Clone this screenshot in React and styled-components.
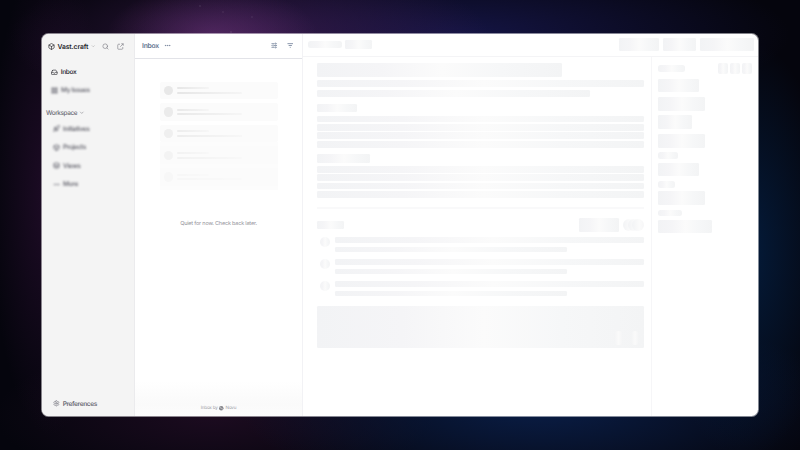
import React from 'react';
import styled, { createGlobalStyle } from 'styled-components';
import { Box, Search, ChevronDown, Inbox as InboxIcon, Rocket, Layers, Ellipsis, Settings } from 'lucide-react';

const GlobalStyle = createGlobalStyle`
  * { box-sizing: border-box; }
  body {
    margin: 0;
    font-family: Inter, "Liberation Sans", sans-serif;
    text-rendering: geometricPrecision;
  }
`;

const Backdrop = styled.div`
  width: 800px;
  height: 450px;
  overflow: hidden;
  padding: 34px 42px;
  background:
    radial-gradient(circle at 200px 6px, rgba(255, 255, 255, 0.1) 0.5px, transparent 1px),
    radial-gradient(circle at 223px 12px, rgba(255, 255, 255, 0.08) 0.5px, transparent 1px),
    radial-gradient(circle at 252px 17px, rgba(255, 255, 255, 0.08) 0.5px, transparent 1px),
    radial-gradient(circle at 231px 32px, rgba(255, 255, 255, 0.1) 0.5px, transparent 1px),
    radial-gradient(ellipse 105px 48px at 212px 34px, rgba(105, 50, 118, 0.55), transparent 100%),
    radial-gradient(ellipse 240px 80px at 250px 38px, rgba(72, 32, 90, 0.65), transparent 100%),
    radial-gradient(ellipse 60px 240px at 50px 195px, rgba(48, 16, 56, 0.6), transparent 100%),
    radial-gradient(ellipse 90px 210px at 745px 250px, rgba(4, 29, 62, 0.95), transparent 100%),
    radial-gradient(ellipse 300px 100px at 540px 405px, rgba(10, 31, 74, 0.95), transparent 100%),
    radial-gradient(ellipse 330px 80px at 460px 35px, rgba(22, 22, 74, 0.9), transparent 100%),
    radial-gradient(ellipse 220px 75px at 215px 415px, rgba(38, 14, 40, 0.7), transparent 100%),
    #05050d;
`;

const Window = styled.div`
  display: flex;
  width: 716px;
  height: 382px;
  border-radius: 6.5px;
  overflow: hidden;
  background: #fff;
  box-shadow: 0 0 0 1px rgba(255, 255, 255, 0.5);
`;

const Sidebar = styled.aside`
  display: flex;
  flex-direction: column;
  width: 93px;
  background: #f4f4f4;
  border-right: 1px solid #ebebed;
`;

const Brand = styled.div`
  display: flex;
  align-items: center;
  height: 16px;
  margin: 4px 0 0 6px;
  font-size: 6.8px;
  font-weight: 600;
  letter-spacing: -0.02em;
  color: #25252a;
  svg { flex: none; }
`;
const BrandName = styled.span`
  width: 31px;
  margin: 0 2.5px 0 2.5px;
  white-space: nowrap;
`;
const BrandActions = styled.div`
  display: flex;
  gap: 8px;
  margin-left: 6.8px;
  color: #777780;
`;

const Nav = styled.nav`
  display: flex;
  flex-direction: column;
  padding-left: ${(p) => p.$inset}px;
  margin-top: ${(p) => p.$top}px;
`;
const NavItem = styled.div`
  display: flex;
  align-items: center;
  gap: ${(p) => p.$gap || 3.1}px;
  height: 18.45px;
  font-size: 6.5px;
  font-weight: 600;
  letter-spacing: -0.055em;
  color: ${(p) => (p.$active ? '#38383e' : '#6b6b74')};
  filter: ${(p) => (p.$soft ? 'blur(0.8px)' : 'none')};
`;
const WorkspaceLabel = styled.div`
  display: flex;
  align-items: center;
  gap: 2px;
  height: 10px;
  margin: 8.2px 0 0 4px;
  font-size: 6.4px;
  font-weight: 500;
  letter-spacing: -0.06em;
  color: #6c6c74;
`;
const Preferences = styled(NavItem)`
  margin: auto 0 3px 11px;
`;

const InboxPanel = styled.section`
  display: flex;
  flex-direction: column;
  align-items: center;
  width: 168px;
  border-right: 1px solid #f2f2f5;
`;
const InboxHeader = styled.header`
  display: flex;
  align-items: center;
  width: 100%;
  height: 25px;
  padding: 0 9px 0.5px 7px;
  border-bottom: 1px solid #e2e3e8;
  color: #64748f;
  font-size: 6.8px;
  font-weight: 600;
  letter-spacing: -0.035em;
`;
const HeaderIcons = styled.div`
  display: flex;
  gap: 9px;
  margin-left: auto;
`;
const InboxTitle = styled.span`
  margin-right: 5px;
`;
const EmptyList = styled.div`
  display: flex;
  flex-direction: column;
  gap: 4px;
  width: 118px;
  height: 109px;
  margin-top: 22.7px;
`;
const EmptyCard = styled.div`
  display: flex;
  align-items: center;
  gap: 4px;
  height: 17.6px;
  padding-left: 4px;
  border-radius: ${(p) => (p.$merged ? 0 : 2)}px;
  background: #fbfbfb;
  box-shadow: ${(p) => (p.$merged ? '0 -4px 0 #fcfcfc, 0 4px 0 #fcfcfc' : 'none')};
`;
const Avatar = styled.div`
  width: 9.5px;
  height: 9.5px;
  border-radius: 50%;
  background: #e8e8e8;
  opacity: ${(p) => p.$strength};
`;
const CardLines = styled.div`
  display: flex;
  flex-direction: column;
  gap: 2.5px;
  opacity: ${(p) => p.$strength};
`;
const CardLine = styled.div`
  width: ${(p) => p.$w}px;
  height: 2px;
  border-radius: 1px;
  background: linear-gradient(90deg, #e6e6e6, #f5f5f5);
`;
const EmptyMessage = styled.p`
  margin: 29.6px 0 0;
  font-size: 5.5px;
  line-height: 8px;
  letter-spacing: -0.035em;
  color: #95959c;
`;
const PanelFooter = styled.footer`
  display: flex;
  align-items: flex-end;
  justify-content: center;
  gap: 1.7px;
  width: 100%;
  height: 35px;
  margin-top: auto;
  padding-bottom: 4px;
  background: linear-gradient(#fff, #fafafa 65%, #fcfcfc);
  font-size: 4.6px;
  line-height: 6px;
  letter-spacing: -0.04em;
  color: #a0a0a6;
  svg { margin-bottom: 1.3px; }
`;

const Detail = styled.main`
  display: flex;
  flex-direction: column;
  flex: 1;
`;
const DetailHeader = styled.header`
  display: flex;
  align-items: center;
  height: 23px;
  padding: 0 4.3px 1px 5.2px;
  border-bottom: 1px solid #f4f4f6;
`;
const HeaderCrumbs = styled.div`
  display: flex;
  align-items: center;
  gap: 3px;
  margin-right: auto;
`;
const HeaderButtons = styled.div`
  display: flex;
  gap: 3.6px;
`;
const Columns = styled.div`
  display: flex;
  flex: 1;
`;
const Issue = styled.article`
  flex: none;
  width: 349px;
  padding: 6.2px 6.7px 0 14px;
  border-right: 1px solid #f6f6f8;
`;
const Bone = styled.div`
  flex: none;
  width: ${(p) => (p.$w ? `${p.$w}px` : '100%')};
  height: ${(p) => p.$h}px;
  margin-top: ${(p) => p.$top || 0}px;
  border-radius: ${(p) => p.$r || 1.3}px;
  background: linear-gradient(90deg, #f2f3f5, #f5f5f7 26%, #fbfbfb 51%, #f6f7f8 75%, #f3f4f5);
`;
const Lines = styled.div`
  display: flex;
  flex-direction: column;
  gap: 1.75px;
  margin-top: ${(p) => p.$top}px;
`;
const Rule = styled.div`
  height: 1.5px;
  margin: 9.2px 0 9.9px;
  background: #f9f9fa;
`;
const ActivityBar = styled.div`
  display: flex;
  align-items: center;
  justify-content: space-between;
  height: 13.5px;
`;
const ActivityActions = styled.div`
  display: flex;
  align-items: center;
  gap: 3.7px;
`;
const AvatarStack = styled.div`
  display: flex;
`;
const StackedAvatar = styled.div`
  width: 12px;
  height: 12px;
  border-radius: 50%;
  background: linear-gradient(90deg, #f2f3f5, #fbfbfb 60%, #f6f6f7);
  & + & { margin-left: -7.2px; }
`;
const Comments = styled.div`
  display: flex;
  flex-direction: column;
  gap: 6.9px;
  margin: 4.9px 0 10.4px;
`;
const Comment = styled.div`
  display: flex;
  gap: 5px;
  height: 15px;
  padding-left: 2.6px;
`;
const CommentLines = styled.div`
  flex: 1;
`;
const Composer = styled(Bone)`
  display: flex;
  justify-content: flex-end;
  align-items: flex-end;
  gap: 8px;
  padding: 0 5px 3px 0;
`;
const ComposerAction = styled.div`
  width: 8.5px;
  height: 14px;
  border-radius: 4px;
  background: linear-gradient(90deg, #f3f4f5, #fafafa 50%, #f3f4f5);
`;
const Properties = styled.aside`
  display: flex;
  flex-direction: column;
  padding: 6.2px 6px 0 6.2px;
  flex: 1;
`;
const PropertiesHeader = styled.div`
  display: flex;
  align-items: center;
  justify-content: space-between;
  height: 11px;
`;
const SquareGroup = styled.div`
  display: flex;
  gap: 1.7px;
`;

const ShareIcon = () => (
  <svg width="7" height="7" viewBox="0 0 14 14" fill="none" stroke="currentColor" strokeWidth="1.2">
    <path d="M6 2.5H3A1.5 1.5 0 0 0 1.5 4v7A1.5 1.5 0 0 0 3 12.5h7a1.5 1.5 0 0 0 1.5-1.5V8M8.5 1.5h4v4M12.5 1.5 6.5 7.5" />
  </svg>
);
const IssuesIcon = () => (
  <svg width="7" height="7" viewBox="0 0 14 14" fill="#85858d">
    <path d="M1 1h5.6v5.6H1zM7.4 1H13v5.6H7.4zM1 7.4h5.6V13H1zM7.4 7.4H13V13H7.4z" />
  </svg>
);
const SlidersIcon = () => (
  <svg width="6.5" height="7" viewBox="0 0 14 14" fill="none" stroke="currentColor" strokeWidth="1.5">
    <path d="M1 3h7M11 3h2M9.5 0.8v4.4M1 7h2M6 7h7M4.5 4.8v4.4M1 11h7M11 11h2M9.5 8.8v4.4" />
  </svg>
);
const FilterIcon = () => (
  <svg width="6.5" height="7" viewBox="0 0 14 14" fill="none" stroke="currentColor" strokeWidth="1.6">
    <path d="M1 3h12M3.5 7h7M6 11h2" />
  </svg>
);
const NovuMark = () => (
  <svg width="4.5" height="4.5" viewBox="0 0 12 12">
    <circle cx="6" cy="6" r="6" fill="#85858b" />
    <path d="M2.5 2.5v2l7 3v2" fill="none" stroke="#fafafa" strokeWidth="1.3" />
  </svg>
);

const cardStrengths = [1, 0.85, 0.65, 0.4, 0.18];
const workspaceItems = [
  { label: 'Initiatives', Icon: Rocket },
  { label: 'Projects', Icon: Box },
  { label: 'Views', Icon: Layers },
  { label: 'More', Icon: Ellipsis },
];
const properties = [
  { w: 40.7, h: 13.2, top: 5 },
  { w: 47, h: 13.3, top: 4.9 },
  { w: 34, h: 13.6, top: 4.9 },
  { w: 47, h: 13.5, top: 5.1 },
  { w: 20.3, h: 6.9, top: 4.8, r: 2.5 },
  { w: 40.7, h: 13.2, top: 3.8 },
  { w: 17.2, h: 6.9, top: 5, r: 2.5 },
  { w: 47, h: 13.8, top: 3.1 },
  { w: 24, h: 6.2, top: 5.1, r: 2.5 },
  { w: 54, h: 13.2, top: 3.8 },
];

export default function App() {
  return (
    <>
      <GlobalStyle />
      <Backdrop>
        <Window>
          <Sidebar>
            <Brand>
              <Box size={7} strokeWidth={2.3} />
              <BrandName>Vast.craft</BrandName>
              <ChevronDown size={4.5} color="#888" />
              <BrandActions>
                <Search size={7} />
                <ShareIcon />
              </BrandActions>
            </Brand>
            <Nav $inset={9} $top={8.7}>
              <NavItem $active><InboxIcon size={6.7} strokeWidth={2.4} />Inbox</NavItem>
              <NavItem $soft><IssuesIcon />My Issues</NavItem>
            </Nav>
            <WorkspaceLabel>Workspace<ChevronDown size={5.5} /></WorkspaceLabel>
            <Nav $inset={11} $top={1.8}>
              {workspaceItems.map(({ label, Icon }) => (
                <NavItem key={label} $soft><Icon size={7} strokeWidth={2.8} />{label}</NavItem>
              ))}
            </Nav>
            <Preferences $gap={3}><Settings size={6.7} />Preferences</Preferences>
          </Sidebar>

          <InboxPanel>
            <InboxHeader>
              <InboxTitle>Inbox</InboxTitle>
              <Ellipsis size={7} />
              <HeaderIcons><SlidersIcon /><FilterIcon /></HeaderIcons>
            </InboxHeader>
            <EmptyList>
              {cardStrengths.map((strength, i) => (
                <EmptyCard key={strength} $merged={i > 2}>
                  <Avatar $strength={strength} />
                  <CardLines $strength={strength}>
                    <CardLine $w={32} />
                    <CardLine $w={64.5} />
                  </CardLines>
                </EmptyCard>
              ))}
            </EmptyList>
            <EmptyMessage>Quiet for now. Check back later.</EmptyMessage>
            <PanelFooter>Inbox by <NovuMark /> Novu</PanelFooter>
          </InboxPanel>

          <Detail>
            <DetailHeader>
              <HeaderCrumbs>
                <Bone $w={34} $h={7} $r={2.5} />
                <Bone $w={27} $h={8.6} />
              </HeaderCrumbs>
              <HeaderButtons>
                <Bone $w={40} $h={13.2} />
                <Bone $w={33.3} $h={13.2} />
                <Bone $w={54} $h={13.2} />
              </HeaderButtons>
            </DetailHeader>
            <Columns>
              <Issue>
                <Bone $w={245.3} $h={13.6} />
                <Bone $h={6.7} $top={3.4} />
                <Bone $w={273} $h={6.7} $top={3.4} />
                <Bone $w={40} $h={8.3} $top={6.8} />
                <Lines $top={3.5}>
                  {[0, 1, 2, 3].map((n) => <Bone key={n} $h={6.7} />)}
                </Lines>
                <Bone $w={53.2} $h={8.6} $top={6.6} />
                <Lines $top={3.2}>
                  {[0, 1, 2, 3].map((n) => <Bone key={n} $h={6.7} />)}
                </Lines>
                <Rule />
                <ActivityBar>
                  <Bone $w={26.7} $h={8.3} />
                  <ActivityActions>
                    <Bone $w={40} $h={13.5} />
                    <AvatarStack>
                      <StackedAvatar /><StackedAvatar /><StackedAvatar />
                    </AvatarStack>
                  </ActivityActions>
                </ActivityBar>
                <Comments>
                  {[0, 1, 2].map((n) => (
                    <Comment key={n}>
                      <Bone $w={10.5} $h={10.5} $r={6} />
                      <CommentLines>
                        <Bone $h={6.6} />
                        <Bone $w={231.7} $h={5} $top={3.3} />
                      </CommentLines>
                    </Comment>
                  ))}
                </Comments>
                <Composer $h={42}><ComposerAction /><ComposerAction /></Composer>
              </Issue>
              <Properties>
                <PropertiesHeader>
                  <Bone $w={27} $h={6.7} $r={2.5} />
                  <SquareGroup>
                    {[0, 1, 2].map((n) => <Bone key={n} $w={10.3} $h={11} $r={2} />)}
                  </SquareGroup>
                </PropertiesHeader>
                {properties.map((item, i) => (
                  <Bone key={i} $w={item.w} $h={item.h} $top={item.top} $r={item.r} />
                ))}
              </Properties>
            </Columns>
          </Detail>
        </Window>
      </Backdrop>
    </>
  );
}
